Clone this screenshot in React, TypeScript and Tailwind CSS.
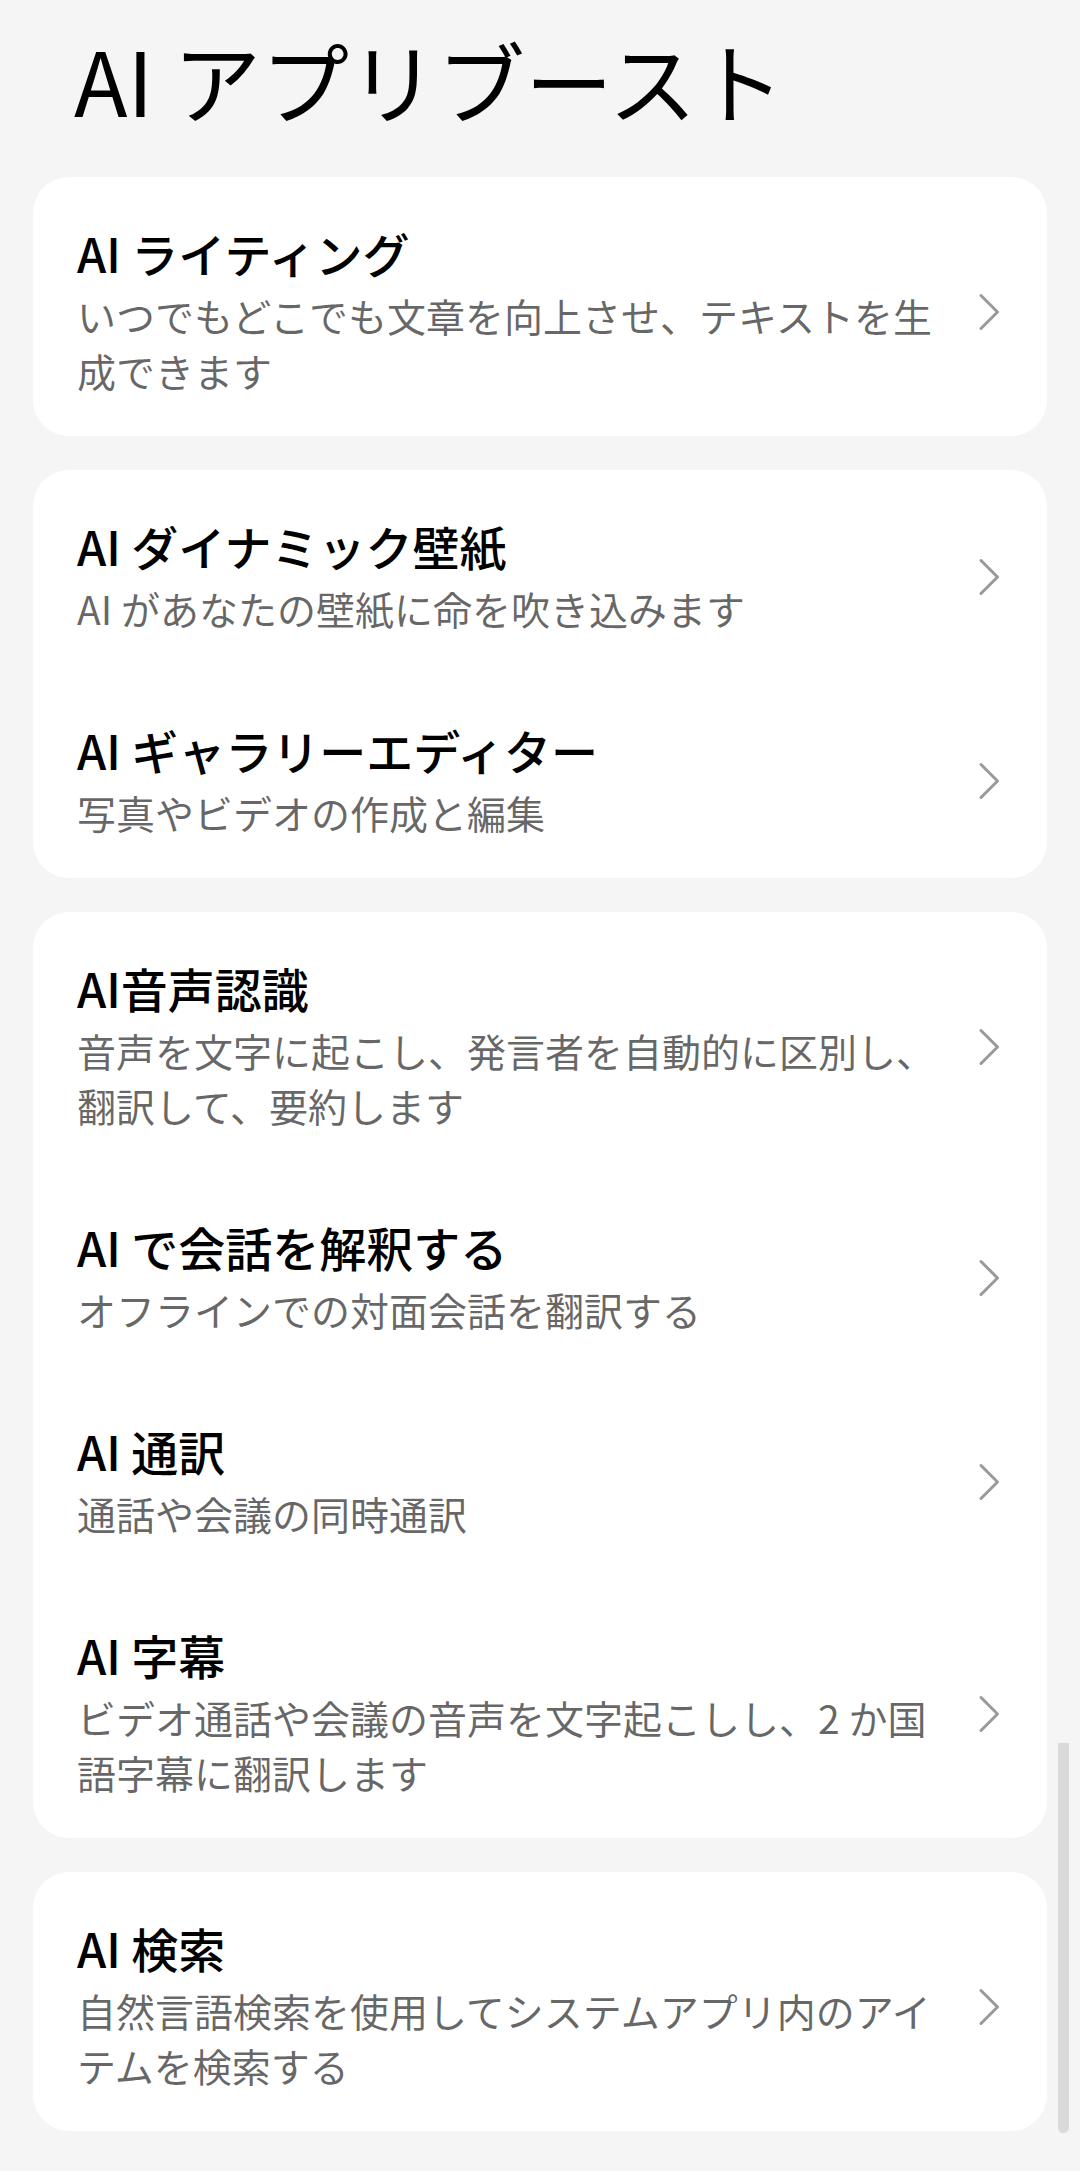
import React from 'react'

// --- Veri ---
type Item = { title: string; desc: string }

const groups: Item[][] = [
  [{ title: 'AI ライティング', desc: 'いつでもどこでも文章を向上させ、テキストを生成できます' }],
  [
    { title: 'AI ダイナミック壁紙', desc: 'AI があなたの壁紙に命を吹き込みます' },
    { title: 'AI ギャラリーエディター', desc: '写真やビデオの作成と編集' },
  ],
  [
    { title: 'AI音声認識', desc: '音声を文字に起こし、発言者を自動的に区別し、翻訳して、要約します' },
    { title: 'AI で会話を解釈する', desc: 'オフラインでの対面会話を翻訳する' },
    { title: 'AI 通訳', desc: '通話や会議の同時通訳' },
    { title: 'AI 字幕', desc: 'ビデオ通話や会議の音声を文字起こしし、2 か国語字幕に翻訳します' },
  ],
  [{ title: 'AI 検索', desc: '自然言語検索を使用してシステムアプリ内のアイテムを検索する' }],
]

function Chevron() {
  return (
    <svg width="22" height="38" viewBox="0 0 22 38" fill="none" className="shrink-0">
      <path d="M3 2.5 L19.5 19 L3 35.5" stroke="#999999" strokeWidth="3" strokeLinecap="round" strokeLinejoin="round" />
    </svg>
  )
}

function Row({ item }: { item: Item }) {
  return (
    <div className="flex items-center pl-[44px] pr-[47px] pt-[48px] pb-[38px]">
      <div className="w-[870px]">
        <div className="text-[47px] leading-[56px] font-medium text-black">{item.title}</div>
        <div className="mt-[7px] text-[39px] leading-[55px] text-black/60">{item.desc}</div>
      </div>
      <div className="ml-auto flex w-[24px] justify-end">
        <Chevron />
      </div>
    </div>
  )
}

export default function App() {
  return (
    <div
      className="relative min-h-[2171px] w-[1080px] bg-[#f5f5f5] px-[33px] pt-[27px] pb-[38px]"
      style={{ fontFamily: '"Noto Sans CJK JP", "Noto Sans", sans-serif' }}
    >
      <h1 className="pl-[41px] text-[88px] leading-[104px] font-normal text-black">AI アプリブースト</h1>

      <div className="mt-[46px] flex flex-col gap-[34px]">
        {groups.map((g, i) => (
          <div key={i} className="rounded-[36px] bg-white">
            {g.map((item) => (
              <Row key={item.title} item={item} />
            ))}
          </div>
        ))}
      </div>

      {/* scrollbar */}
      <div className="absolute left-[1058px] top-[1743px] h-[390px] w-[11px] rounded-b-full bg-[#dadada]" />
    </div>
  )
}
